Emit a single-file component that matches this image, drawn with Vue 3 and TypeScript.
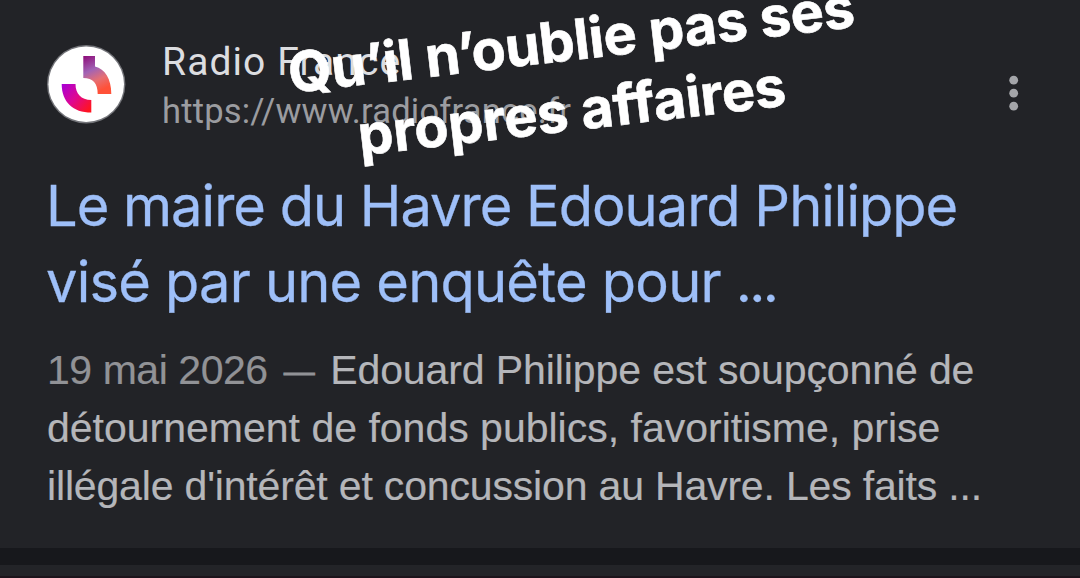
<script setup lang="ts">
const dots: number[] = [80.2, 93.2, 106.2]
</script>

<template>
  <main class="screen">
    <article class="card">
      <header class="source">
        <svg class="favicon" viewBox="0 0 80 80" aria-hidden="true">
          <defs>
            <linearGradient id="upper" x1="0" y1="0" x2="0.35" y2="1">
              <stop offset="0" stop-color="#8d0b78" />
              <stop offset="0.42" stop-color="#a163b5" />
              <stop offset="0.72" stop-color="#e76f72" />
              <stop offset="1" stop-color="#ff5138" />
            </linearGradient>
            <linearGradient id="lower" x1="0" y1="0" x2="1" y2="0.8">
              <stop offset="0" stop-color="#a500d8" />
              <stop offset="0.5" stop-color="#dd0794" />
              <stop offset="1" stop-color="#ff1420" />
            </linearGradient>
          </defs>
          <circle cx="40.2" cy="40.2" r="39.2" fill="#74757a" />
          <circle cx="40.2" cy="40.2" r="37.8" fill="#fff" />
          <path d="M37.3 12H49V22.5C59 25 65.300 35 65.300 50H51.700C51.700 39.500 47 34 37.300 34Z" fill="url(#upper)" />
          <path d="M15.700 40H29.500C29.500 49.500 35 56 45.300 56V68.600C27 68.600 15.700 58 15.700 40Z" fill="url(#lower)" />
        </svg>
        <div class="site">
          <div class="name">Radio France</div>
          <div class="url">https://www.radiofrance.fr</div>
        </div>
        <svg class="menu" viewBox="1004 70 20 46" aria-hidden="true">
          <circle v-for="y in dots" :key="y" cx="1013.7" :cy="y" r="4.4" fill="#a4a5a9" />
        </svg>
      </header>
      <h1 class="title">
        <span class="row t0">Le maire du Havre Edouard Philippe</span>
        <span class="row t1">visé par une enquête pour <span class="more">...</span></span>
      </h1>
      <p class="snippet">
        <span class="row s0"><span class="date">19 mai 2026 <span class="dash">—</span></span>Edouard Philippe est soupçonné de</span>
        <span class="row s1">détournement de fonds publics, favoritisme, prise</span>
        <span class="row s2">illégale d'intérêt et concussion au Havre. Les faits ...</span>
      </p>
    </article>
    <div class="gap"></div>
    <div class="next"></div>
    <div class="caption">
      <span class="row c0">Qu’il n’oublie pas ses</span>
      <span class="row c1">propres affaires</span>
    </div>
  </main>
</template>

<style>
html, body { margin: 0; background: #222327; }
</style>

<style scoped>
.screen { position: relative; width: 1080px; height: 578px; overflow: hidden; background: #222327; }
.card { box-sizing: border-box; height: 548px; padding: 36px 56px 0 46px; background: #222327; }
.source { display: flex; height: 132px; align-items: flex-start; }
.favicon { width: 80px; height: 80px; margin-top: 8px; flex: none; }
.site { flex: 1; margin-left: 36px; white-space: nowrap; }
.name { font: 400 39px/53px Roboto, sans-serif; color: #dcdde0; letter-spacing: 1.1px; }
.url { font: 400 34.5px/44px Roboto, sans-serif; color: #9b9ca0; letter-spacing: 0.2px; }
.menu { width: 20px; height: 46px; margin-top: 34px; }
.row { display: block; width: max-content; height: 1lh; white-space: nowrap; }
.title { margin: 0; font: 400 56px/76px Inter, sans-serif; color: #9ebff8; -webkit-text-stroke: 0.3px #9ebff8; letter-spacing: -1px; }
.t1 { letter-spacing: -0.8px; }
.more { letter-spacing: -2.6px; }
.snippet { margin: 21px 0 0 1px; font: 400 41px/58px "Liberation Sans", Arial, sans-serif; color: #b5b6ba; -webkit-text-stroke: 0.2px currentColor; }
.date { color: #919296; letter-spacing: -0.45px; }
.dash { font-size: 31px; line-height: 1; margin: 0 16px 0 5px; vertical-align: 2px; -webkit-text-stroke: 0.8px #919296; }
.s0 { letter-spacing: -0.1px; }
.s2 { letter-spacing: -0.17px; }
.gap { height: 17px; background: #17181c; }
.next { box-sizing: border-box; height: 13px; background: #232428; border-bottom: 2px solid #1c141b; }
.caption {
  position: absolute; left: 265px; top: 5px; width: 620px;
  font: 700 56px/70px Inter, sans-serif; color: #fff;
  font-feature-settings: "calt" 0, "liga" 0;
  -webkit-text-stroke: 0.6px #fff;
  transform: rotate(-6.7deg);
}
.caption .row { margin: 0 auto; }
.c0 { letter-spacing: -0.4px; }
.c1 { letter-spacing: -0.2px; padding-right: 15px; }
</style>
